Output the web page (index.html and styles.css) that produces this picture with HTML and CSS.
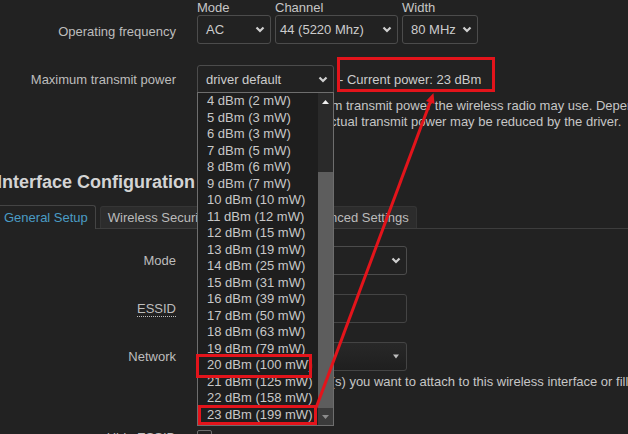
FILE: index.html
```html
<!DOCTYPE html>
<html>
<head>
    <title>Wireless - Device Configuration</title>
    <link rel="stylesheet" href="styles.css">
</head>
<body>
<div class="page">

<div class="cbi-value first">
    <label class="cbi-value-title">Operating frequency</label>
    <div class="cbi-value-field">
        <div class="htmodes">
            <div class="opt">
                <span class="opt-label">Mode</span>
                <div class="select w-mode">AC <svg class="chev" width="10" height="7" viewBox="0 0 10 7"><path d="M1.5 1.5 L5 5 L8.5 1.5" fill="none" stroke="#cfcfcf" stroke-width="2.2"/></svg></div>
            </div>
            <div class="opt">
                <span class="opt-label">Channel</span>
                <div class="select w-channel">44 (5220 Mhz) <svg class="chev" width="10" height="7" viewBox="0 0 10 7"><path d="M1.5 1.5 L5 5 L8.5 1.5" fill="none" stroke="#cfcfcf" stroke-width="2.2"/></svg></div>
            </div>
            <div class="opt">
                <span class="opt-label">Width</span>
                <div class="select w-width">80 MHz <svg class="chev" width="10" height="7" viewBox="0 0 10 7"><path d="M1.5 1.5 L5 5 L8.5 1.5" fill="none" stroke="#cfcfcf" stroke-width="2.2"/></svg></div>
            </div>
        </div>
    </div>
</div>

<div class="cbi-value">
    <label class="cbi-value-title">Maximum transmit power</label>
    <div class="cbi-value-field power-row">
        <div class="select w-power">driver default <svg class="chev" width="10" height="7" viewBox="0 0 10 7"><path d="M1.5 1.5 L5 5 L8.5 1.5" fill="none" stroke="#cfcfcf" stroke-width="2.2"/></svg></div>
        <span class="current">- Current power: 23 dBm</span>
    </div>
    <div class="cbi-value-description">
        Specifies the maximum transmit power the wireless radio may use. Depending on regulatory requirements and<br>
        wireless usage, the actual transmit power may be reduced by the driver.
    </div>
</div>

<h3 class="section-title">Interface Configuration</h3>

<ul class="tabs">
    <li class="tab active">General Setup</li>
    <li class="tab">Wireless Security</li>
    <li class="tab narrow">MAC-Filter</li>
    <li class="tab">Advanced Settings</li>
</ul>

<div class="cbi-value after-tabs">
    <label class="cbi-value-title">Mode</label>
    <div class="cbi-value-field">
        <div class="select w-full">Access Point <svg class="chev" width="10" height="7" viewBox="0 0 10 7"><path d="M1.5 1.5 L5 5 L8.5 1.5" fill="none" stroke="#cfcfcf" stroke-width="2.2"/></svg></div>
    </div>
</div>

<div class="cbi-value">
    <label class="cbi-value-title"><abbr class="essid">ESSID</abbr></label>
    <div class="cbi-value-field">
        <div class="input w-full">OpenWrt</div>
    </div>
</div>

<div class="cbi-value tight">
    <label class="cbi-value-title">Network</label>
    <div class="cbi-value-field">
        <div class="combo w-full">lan <svg width="8" height="5" viewBox="0 0 8 5"><path d="M1 0.5 L7 0.5 L4 4.5 Z" fill="#bdbdbd"/></svg></div>
    </div>
    <div class="cbi-value-description help">
        Choose the network(s) you want to attach to this wireless interface or fill out the custom field to define a new network.
    </div>
</div>

<div class="cbi-value hide-row">
    <label class="cbi-value-title">Hide ESSID</label>
    <div class="cbi-value-field">
        <span class="checkbox"></span>
    </div>
</div>

<!-- open list of the transmit power select -->
<div class="dropdown">
    <ul class="options">
        <li>4 dBm (2 mW)</li>
        <li>5 dBm (3 mW)</li>
        <li>6 dBm (3 mW)</li>
        <li>7 dBm (5 mW)</li>
        <li>8 dBm (6 mW)</li>
        <li>9 dBm (7 mW)</li>
        <li>10 dBm (10 mW)</li>
        <li>11 dBm (12 mW)</li>
        <li>12 dBm (15 mW)</li>
        <li>13 dBm (19 mW)</li>
        <li>14 dBm (25 mW)</li>
        <li>15 dBm (31 mW)</li>
        <li>16 dBm (39 mW)</li>
        <li>17 dBm (50 mW)</li>
        <li>18 dBm (63 mW)</li>
        <li>19 dBm (79 mW)</li>
        <li>20 dBm (100 mW)</li>
        <li>21 dBm (125 mW)</li>
        <li>22 dBm (158 mW)</li>
        <li>23 dBm (199 mW)</li>
    </ul>
    <div class="scrollbar">
        <div class="sb-btn"><svg width="7" height="4" viewBox="0 0 7 4"><path d="M0 4 L3.5 0 L7 4 Z" fill="#f0f0f0"/></svg></div>
        <div class="sb-track"></div>
        <div class="sb-thumb"></div>
        <div class="sb-btn down"><svg width="7" height="4" viewBox="0 0 7 4"><path d="M0 0 L7 0 L3.5 4 Z" fill="#8c8c8c"/></svg></div>
    </div>
</div>

<!-- red annotation drawn over the screenshot -->
<svg class="annotate" width="628" height="434" viewBox="0 0 628 434">
    <rect x="338.5" y="58.5" width="155" height="32" fill="none" stroke="#e3141b" stroke-width="3"/>
    <rect x="197.5" y="355.5" width="113" height="21" fill="none" stroke="#e3141b" stroke-width="3"/>
    <rect x="199.5" y="406.5" width="116" height="17" fill="none" stroke="#e3141b" stroke-width="3"/>
    <line x1="316" y1="408" x2="431" y2="100" stroke="#e3141b" stroke-width="3"/>
    <polygon points="433.5,93 434.5,104 426,101" fill="#e3141b"/>
</svg>

</div>
</body>
</html>
```

FILE: styles.css
```css
body {
    margin: 0;
    background-color: #222222;
    color: #c6c6c6;
    font-family: "Liberation Sans", Arial, sans-serif;
    font-size: 13px;
    width: 628px;
    height: 434px;
    overflow: hidden;
}

.page {
    position: relative;
    height: 434px;
}

/* form rows */

.cbi-value {
    display: grid;
    grid-template-columns: 176px auto;
    column-gap: 21px;
    margin-top: 19px;
}

.cbi-value.first {
    margin-top: 0;
}

.cbi-value.first .cbi-value-title {
    padding-top: 17px;
}

.cbi-value.after-tabs {
    margin-top: 17px;
}

.cbi-value.tight {
    margin-top: 19px;
}

.cbi-value-title {
    text-align: right;
    line-height: 29px;
    color: #bdbdbd;
}

.cbi-value-description {
    grid-column: 2;
    margin-top: 4px;
    padding-left: 11px;
    line-height: 16px;
    white-space: nowrap;
}

.cbi-value-description.help {
    margin-top: 3px;
    padding-left: 18px;
}

.essid {
    text-decoration: none;
    border-bottom: 1px dotted #bdbdbd;
}

.htmodes {
    display: flex;
    gap: 4px;
}

.opt {
    display: flex;
    flex-direction: column;
}

.opt-label {
    line-height: 15px;
}

.select, .input, .combo {
    box-sizing: border-box;
    height: 29px;
    border: 1px solid #4c4c4c;
    border-radius: 3px;
    display: flex;
    align-items: center;
    justify-content: space-between;
    padding: 0 5px 0 8px;
    color: #cccccc;
    white-space: nowrap;
}

.input {
    border-color: #444444;
}

.combo {
    background: linear-gradient(#282828, #1f1f1f);
    border-color: #444444;
    padding-right: 6px;
}

.w-mode { width: 74px; }
.w-channel { width: 123px; padding-left: 4px; }
.w-width { width: 76px; }
.w-power { width: 137px; }
.w-full { width: 210px; }

.power-row {
    display: flex;
    align-items: center;
}

.current {
    margin-left: 5px;
    color: #cccccc;
}

/* section + tabs */

.section-title {
    font-size: 18px;
    font-weight: bold;
    line-height: 22px;
    margin: 41px 0 0 -3px;
    color: #d4d4d4;
}

.tabs {
    display: flex;
    list-style: none;
    margin: 12px 0 0 -4px;
    padding: 0;
    height: 23px;
    border-bottom: 1px solid #3d3d3d;
}

.tab {
    box-sizing: border-box;
    height: 22px;
    margin-top: 1px;
    line-height: 21px;
    padding: 0 7px;
    margin-right: 4px;
    border: 1px solid #353535;
    border-bottom: none;
    border-radius: 3px 3px 0 0;
    background-color: #2c2c2c;
    color: #bbbbbb;
}

.tab.narrow {
    padding: 0 2px;
}

.tab.active {
    height: 24px;
    margin-top: 0;
    line-height: 23px;
    background-color: #222222;
    border-color: #444444;
    color: #4a9cc5;
}

.hide-row {
    margin-top: 39px;
}

.hide-row .cbi-value-title {
    line-height: 18px;
}

.checkbox {
    display: block;
    box-sizing: border-box;
    width: 15px;
    height: 15px;
    margin-top: 1px;
    border: 1px solid #6f6f6f;
    border-radius: 2px;
}

/* open select list */

.dropdown {
    position: absolute;
    left: 197px;
    top: 92px;
    width: 137px;
    height: 334px;
    box-sizing: border-box;
    border: 1px solid #6e6e6e;
    background-color: #1e1e1e;
    display: flex;
}

.options {
    flex: 1;
    list-style: none;
    margin: 0;
    padding: 0;
}

.options li {
    line-height: 16.5px;
    padding-left: 9px;
    white-space: nowrap;
    color: #c8c8c8;
}

.scrollbar {
    width: 15px;
    display: flex;
    flex-direction: column;
    background-color: #2a2a2a;
}

.sb-btn {
    height: 17px;
    display: flex;
    align-items: center;
    justify-content: center;
}

.sb-btn.down {
    background-color: #3b3b3b;
}

.sb-track {
    height: 62px;
}

.sb-thumb {
    flex: 1;
    background-color: #5d5d5d;
}

.annotate {
    position: absolute;
    left: 0;
    top: 0;
    pointer-events: none;
}
```
